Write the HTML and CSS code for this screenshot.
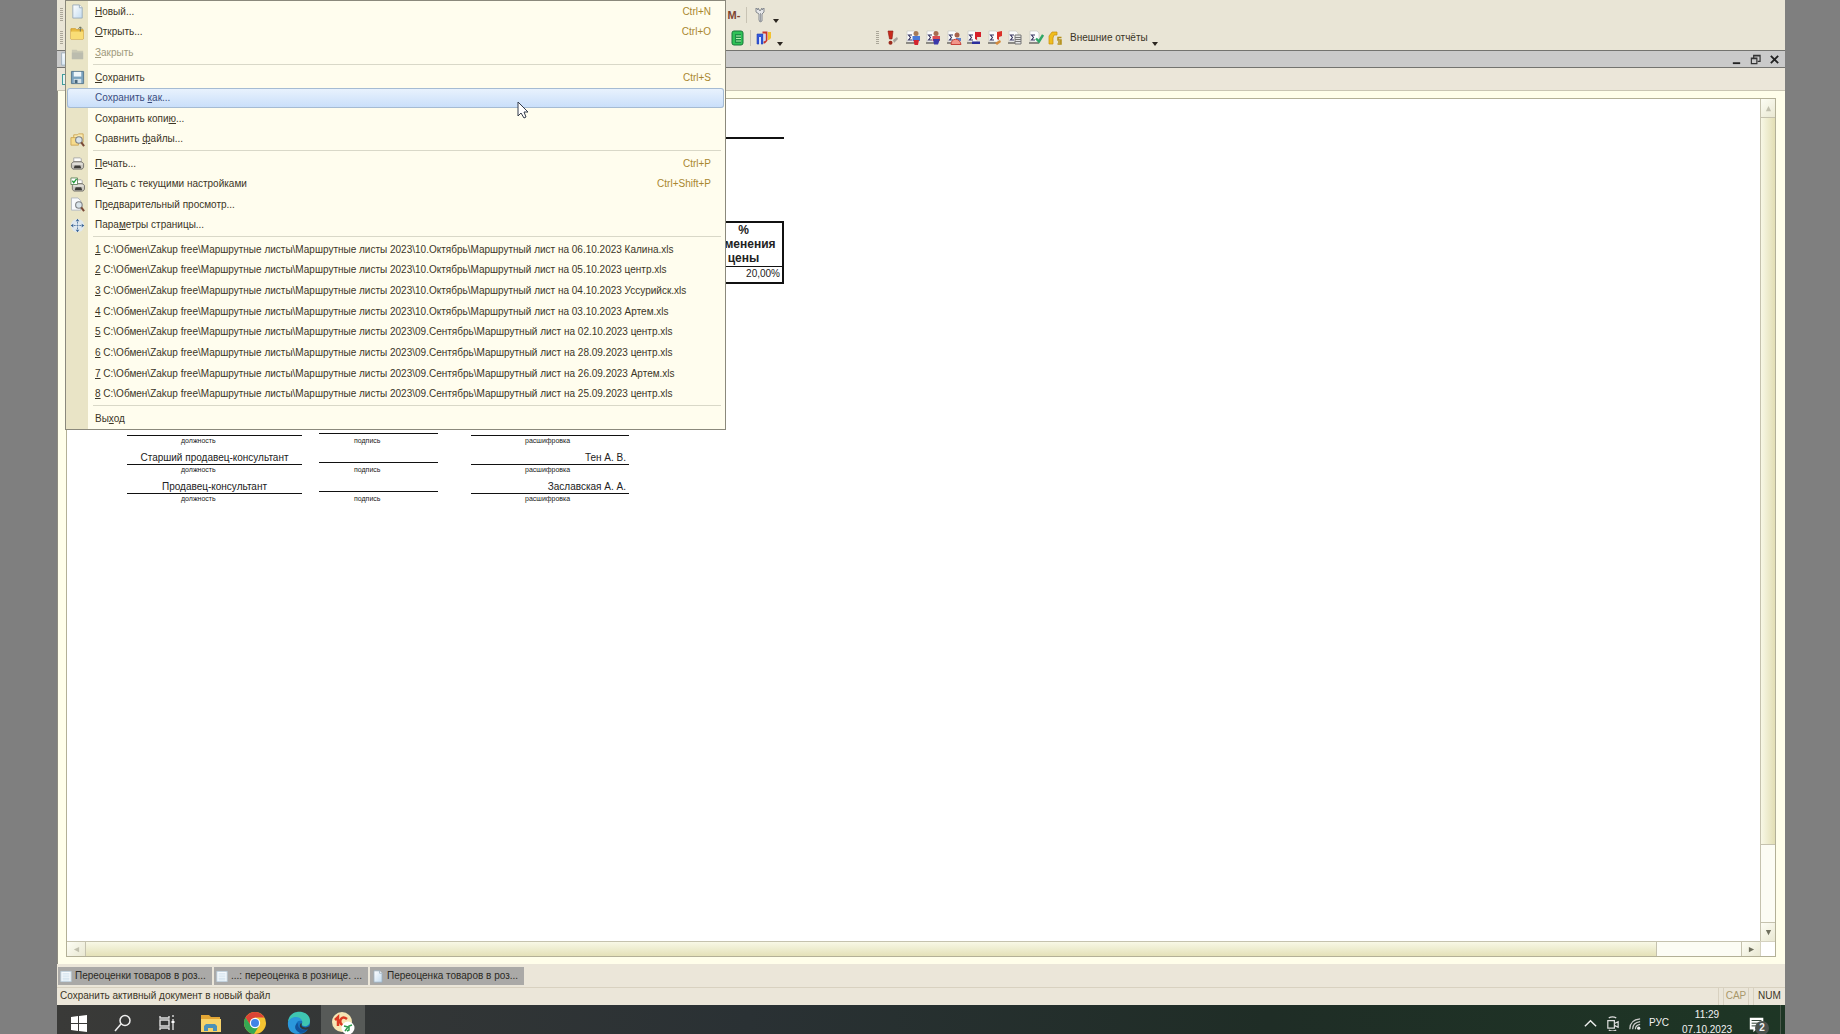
FILE: index.html
```html
<!DOCTYPE html>
<html lang="ru">
<head>
<meta charset="utf-8">
<title>Переоценка товаров в рознице</title>
<link rel="stylesheet" href="styles.css">
</head>
<body>
<svg class="defs" aria-hidden="true">
  <defs>
    <linearGradient id="paper" x1="0" y1="0" x2="1" y2="1"><stop offset="0" stop-color="#fff"/><stop offset="1" stop-color="#c3dcf0"/></linearGradient>
    <symbol id="page" viewBox="0 0 14 16"><path d="M2 1h7l3 3v11H2z" fill="url(#paper)" stroke="#9aacba"/><path d="M9 1v3h3" fill="#fff" stroke="#9aacba"/></symbol>
    <symbol id="doc" viewBox="0 0 14 14"><path d="M1 1h12v12H1z" fill="#f6fafd" stroke="#b9cbd9"/><path d="M3 4h8M3 6.500h8M3 9h8M3 11h8" stroke="#c4d9e8"/></symbol>
    <symbol id="printer" viewBox="0 0 16 16"><path d="M4 7V2h7l1 1v4" fill="#fdfdfb" stroke="#aaa"/><path d="M1.500 8 4 6h8l2.500 2v4L13 14H3l-1.500-2z" fill="#c9c7c0" stroke="#77756e"/><path d="M5 10h6l1 3H4z" fill="#3d3c38"/><path d="M2.500 8.500h11" stroke="#f6f5f0"/></symbol>
    <symbol id="lens" viewBox="0 0 16 16"><circle cx="9.500" cy="8.500" r="3.500" fill="#d9e4ea" stroke="#7f8285" stroke-width="1.200"/><path d="m12 11 3 4" stroke="#7a4a38" stroke-width="2.200"/></symbol>
    <symbol id="sigma" viewBox="0 0 16 16"><path d="M2 1h7l2 2v9H2z" fill="#fcfcfc" stroke="#c9c9c4" stroke-width=".7"/><path d="M7 5H3.500L5.500 7.500 3.500 10H7" fill="none" stroke="#34325e" stroke-width="1.100"/><path d="M1 13h10" stroke="#343434"/></symbol>
  </defs>
</svg>

<div class="app">
  <header class="bars">
    <div class="bar">
      <span class="grip"></span>
      <div class="tools tools-top">
        <button class="memory" type="button">M-</button>
        <span class="split"></span>
        <button class="tool" type="button" aria-label="Настройка"><svg viewBox="0 0 16 16"><path d="M4 1v4l3 2v6l1 2 2-1V7l2-2V1L10 3V1L8 4 6 1v2z" fill="#e5e6e8" stroke="#85898f"/><path d="M8.500 6v8" stroke="#9a9ea3"/></svg></button>
        <span class="more"></span>
      </div>
    </div>
    <div class="bar">
      <span class="grip"></span>
      <div class="tools tools-low">
        <button class="tool" type="button" aria-label="Калькулятор"><svg viewBox="0 0 16 16"><rect x="3" y="1" width="11" height="14" rx="2" fill="#2fc257" stroke="#17793a"/><path d="M6 4h6v9H6z" fill="#1c8f46"/><path d="M7 6h5M7 8.500h5M7 11h5" stroke="#b5f2ae"/></svg></button>
        <span class="split"></span>
        <button class="tool" type="button" aria-label="Окна"><svg viewBox="0 0 16 16"><path d="M1 4h6v10H5V7H3v7H1z" fill="#3358dc" stroke="#2440b0" stroke-width=".6"/><path d="M3 7h2v7H3z" fill="#d5e0fb"/><path d="M6.500 2.500h4v8L8 13" fill="none" stroke="#c9342c" stroke-width="1.800"/><path d="M7.500 4h2v7h-2z" fill="#c8d6fa"/><path d="M12 2h3v6l-2 2h-1z" fill="#f2c230"/></svg></button>
        <span class="more"></span>
      </div>
      <div class="reports">
        <span class="grip"></span>
        <div class="report-icons">
          <button class="tool" type="button" aria-label="Важное"><svg viewBox="0 0 16 16"><path d="M4 1h5L8 9H5.500z" fill="#c92a1c" stroke="#8c1a12" stroke-width=".6"/><circle cx="6.500" cy="12.700" r="2" fill="#9c2c1e"/><path d="m9 10 4-3 1 2-4 4z" fill="#a5a39b"/></svg></button>
          <button class="tool" type="button" aria-label="Отчёт 1"><svg viewBox="0 0 16 16"><use href="#sigma"/><circle cx="11" cy="3.500" r="2.500" fill="#a87a58"/><path d="M7.500 6h7.500v5H7.500z" fill="#4b79d8"/><path d="M8.500 10H14l-1 5H9.500z" fill="#d3232d"/></svg></button>
          <button class="tool" type="button" aria-label="Отчёт 2"><svg viewBox="0 0 16 16"><use href="#sigma"/><circle cx="11" cy="3.500" r="2.500" fill="#a86b50"/><path d="M7.500 6H15v5H7.500z" fill="#dc4b51"/><path d="M8 9h7l-2 5.500H9z" fill="#3b38aa"/></svg></button>
          <button class="tool" type="button" aria-label="Отчёт 3"><svg viewBox="0 0 16 16"><use href="#sigma"/><circle cx="11" cy="5" r="2.500" fill="#a8614a"/><path d="M10 8h5v3h-5z" fill="#5f82d0"/><path d="M5 14.500c0-7 9-7 10 0z" fill="#f1968a" stroke="#c7423a"/></svg></button>
          <button class="tool" type="button" aria-label="Отчёт 4"><svg viewBox="0 0 16 16"><use href="#sigma"/><path d="M9 9V2h6v5h-4v3z" fill="#d61f2a"/><path d="M6 11.500h8V14H6z" fill="#2b2f9c"/></svg></button>
          <button class="tool" type="button" aria-label="Отчёт 5"><svg viewBox="0 0 16 16"><use href="#sigma"/><path d="M10 9V2l5-1v5l-3 1v3z" fill="#dc3028"/><path d="m8 13 5-3 1 2-4 3z" fill="#d58a3c"/></svg></button>
          <button class="tool" type="button" aria-label="Отчёт 6"><svg viewBox="0 0 16 16"><use href="#sigma"/><path d="M8 5h6v9H8z" fill="#e6e6e6" stroke="#777"/><path d="M8 7.500h6M8 9.500h6M8 11.500h6" stroke="#777"/></svg></button>
          <button class="tool" type="button" aria-label="Отчёт 7"><svg viewBox="0 0 16 16"><use href="#sigma"/><path d="m8 8.500 3 3L15 5" fill="none" stroke="#2ea665" stroke-width="2.400"/></svg></button>
          <button class="tool" type="button" aria-label="Справка"><svg viewBox="0 0 16 16"><path d="M4 14H1V6l3-4h5v3H6L5 8v6z" fill="#f0bd1e" stroke="#c68e10" stroke-width=".7"/><path d="M13.500 7.500H10V10h3v4H9.500M10 12h3" fill="none" stroke="#b48f18" stroke-width="1.500"/></svg></button>
        </div>
        <button class="outer" type="button">Внешние отчёты</button>
        <span class="more"></span>
      </div>
    </div>
  </header>

  <div class="titlebar">
    <svg class="title-icon" viewBox="0 0 14 16"><use href="#page"/></svg>
    <div class="window-buttons">
      <button type="button" aria-label="Свернуть"><svg viewBox="0 0 12 12"><path d="M2 10h8" stroke="#222" stroke-width="2"/></svg></button>
      <button type="button" aria-label="Восстановить"><svg viewBox="0 0 12 12"><path d="M4 4V1.500h7V8H8.500M1.500 4.500h6v6h-6zM4 2h7M1.500 5h6" fill="none" stroke="#333" stroke-width="1.300"/></svg></button>
      <button type="button" aria-label="Закрыть окно"><svg viewBox="0 0 12 12"><path d="m2 2 8 8M10 2l-8 8" stroke="#222" stroke-width="2"/></svg></button>
    </div>
  </div>
  <div class="docbar"><span class="docbar-icon"></span></div>

  <main class="workspace">
    <div class="sheet">
      <div class="canvas">
        <hr class="rule">
        <table class="prices">
          <thead><tr><th>%<br>изменения<br>цены</th></tr></thead>
          <tbody><tr><td>20,00%</td></tr></tbody>
        </table>
        <div class="signs">
          <div class="sign"><span class="name"></span><span class="name short"></span><span class="name person"></span><small>должность</small><small>подпись</small><small>расшифровка</small></div>
          <div class="sign"><span class="name">Старший продавец-консультант</span><span class="name short"></span><span class="name person">Тен А. В.</span><small>должность</small><small>подпись</small><small>расшифровка</small></div>
          <div class="sign"><span class="name">Продавец-консультант</span><span class="name short"></span><span class="name person">Заславская А. А.</span><small>должность</small><small>подпись</small><small>расшифровка</small></div>
        </div>
      </div>
      <div class="vscroll">
        <button class="arrow" type="button" aria-label="Вверх"><svg class="dim" viewBox="0 0 8 8"><path d="M4 1 7 7H1z"/></svg></button>
        <div class="thumb"></div><div class="track"></div>
        <button class="arrow" type="button" aria-label="Вниз"><svg viewBox="0 0 8 8"><path d="M1 1h6L4 7z"/></svg></button>
      </div>
      <div class="hscroll">
        <button class="arrow" type="button" aria-label="Влево"><svg class="dim" viewBox="0 0 8 8"><path d="M7 1v6L1 4z"/></svg></button>
        <div class="thumb"></div><div class="track"></div>
        <button class="arrow" type="button" aria-label="Вправо"><svg viewBox="0 0 8 8"><path d="M1 1v6l6-3z"/></svg></button>
      </div>
      <div class="corner"></div>
    </div>
  </main>

  <nav class="tabs">
    <button type="button"><svg viewBox="0 0 14 14"><use href="#doc"/></svg>Переоценки товаров в роз...</button>
    <button type="button"><svg viewBox="0 0 14 14"><use href="#doc"/></svg>...: переоценка в рознице. ...</button>
    <button type="button"><svg viewBox="0 0 14 16"><use href="#page"/></svg>Переоценка товаров в роз...</button>
  </nav>
  <footer class="status">
    <span class="hint">Сохранить активный документ в новый файл</span>
    <span class="lock off">CAP</span><span class="lock">NUM</span>
  </footer>

  <div class="taskbar">
    <button type="button" aria-label="Пуск"><svg viewBox="0 0 24 24"><path d="m4 6 7-1v7H4zM12 5l8-1v8h-8zM4 13h7v7l-7-1zM12 13h8v8l-8-1z" fill="#fff"/></svg></button>
    <button type="button" aria-label="Поиск"><svg viewBox="0 0 24 24"><circle cx="14" cy="9.500" r="5" fill="none" stroke="#eee" stroke-width="1.500"/><path d="m10 13-6 7" stroke="#eee" stroke-width="1.500"/></svg></button>
    <button type="button" aria-label="Представление задач"><svg viewBox="0 0 24 24"><path d="M5 5v2h9V5M5 19v-2h9v2M5 9h9v6H5zM18 8v11M18 4v2" fill="none" stroke="#ddd" stroke-width="1.400"/><path d="M16.500 10h3v2h-3z" fill="#fff"/></svg></button>
    <button type="button" aria-label="Проводник"><svg viewBox="0 0 24 24"><path d="M2 4h8l2 2h9v15H2z" fill="#e3a634"/><path d="M2 8h20v13H2z" fill="#f8d36a"/><path d="M5 20v-5l2-2h9l2 2v5h-4v-3H9v3z" fill="#4d91b8"/></svg></button>
    <button type="button" aria-label="Chrome"><svg viewBox="0 0 24 24"><circle cx="12" cy="12" r="11" fill="#f5c431"/><path d="M2.500 6.500A11 11 0 0 1 21.500 6.500H12L7.200 14.500z" fill="#dc4436"/><path d="M2.500 6.500A11 11 0 0 0 11 23l5-8H8z" fill="#35a853"/><circle cx="12" cy="12" r="5.200" fill="#fff"/><circle cx="12" cy="12" r="4" fill="#4284e8"/></svg></button>
    <button type="button" aria-label="Edge"><svg viewBox="0 0 24 24"><circle cx="12" cy="12" r="11" fill="#1670bd"/><path d="M1 11C2-3 23-2 23 10c0 6-7 6-8 4-1-1 1-2 0-4C12 5 4 6 1 11z" fill="#3fc6b1"/><path d="M1 11C4 4 14 5 15 10c-7-2-8 7-2 12C5 25 0 18 1 11z" fill="#2b98dc"/><path d="M11 12c-1 6 5 8 10 6-3 4-8 5-11 2s-2-7 1-8z" fill="#12539b"/><path d="M14 12c2 1-1 2 2 4 3 1 6 0 7-2l-1 4c-5 2-12-1-8-6z" fill="#30383a"/></svg></button>
    <button class="active" type="button" aria-label="1С"><svg viewBox="0 0 24 24"><circle cx="11" cy="11" r="10" fill="#f7e6b4"/><path d="M4 9 7 6v9M16 8c-5-4-8 1-6 5l3 2" fill="none" stroke="#dc3a22" stroke-width="2.500"/><circle cx="17" cy="17" r="6.500" fill="#fff"/><path d="m13 15 4 1-3 4M21 14l-3 1v4l-2 1" fill="none" stroke="#2d9c4e" stroke-width="1.500"/></svg></button>
    <div class="tray">
      <svg viewBox="0 0 16 16"><path d="m2 11 6-6 6 6" fill="none" stroke="#eee" stroke-width="1.500"/></svg>
      <svg viewBox="0 0 16 16"><path d="M3 5h7v8H3zM10 8l4-2v6l-4-2M4 2q4-2 8 0M4 15q4 2 8 0" fill="none" stroke="#ddd" stroke-width="1.300"/></svg>
      <svg viewBox="0 0 16 16"><path d="M3 14Q3 4 14 3M6 14q0-7 8-8M9 14q0-4 5-5" fill="none" stroke="#ccc" stroke-width="1.300"/><circle cx="12.500" cy="13" r="1.700" fill="#eee"/></svg>
      <span class="lang">РУС</span>
      <time class="clock" datetime="2023-10-07T11:29">11:29<br>07.10.2023</time>
      <span class="notes"><svg viewBox="0 0 20 20"><path d="M2 2h15v13H9l-3 3v-3H2z" fill="#fff"/><path d="M4 5h11M4 8h11M4 11h8" stroke="#1e3325"/></svg><b>2</b></span>
    </div>
  </div>

  <div class="menu" role="menu">
    <div class="group three">
      <button role="menuitem"><svg viewBox="0 0 14 16"><use href="#page"/></svg><span><u>Н</u>овый...</span><kbd>Ctrl+N</kbd></button>
      <button role="menuitem"><svg viewBox="0 0 16 16"><path d="M1 4h5l1 1h7v10H1z" fill="#e9bd45" stroke="#cf9d2b"/><path d="M1 7h13v8H1z" fill="#f9dd75"/><path d="M11 7V2M9 4l2-2 2 2" fill="none" stroke="#67705a"/></svg><span><u>О</u>ткрыть...</span><kbd>Ctrl+O</kbd></button>
      <button role="menuitem" disabled><svg viewBox="0 0 16 16"><path d="M2 4h5l1 1h6v9H2z" fill="#c9c8b4"/><path d="M2 7h12v7H2z" fill="#bbbcae"/></svg><span><u>З</u>акрыть</span></button>
    </div>
    <hr>
    <div class="group four">
      <button role="menuitem"><svg viewBox="0 0 16 16"><path d="M1.500 1.500h13v13h-13z" fill="#7ba3bf" stroke="#57778d"/><path d="M4 2h8v5H4z" fill="#eef6fa"/><path d="M4 9.500h8V14H4z" fill="#d4e2ea"/><path d="M5 10.500h3V14H5z" fill="#47677c"/></svg><span><u>С</u>охранить</span><kbd>Ctrl+S</kbd></button>
      <button role="menuitem" class="current"><i></i><span>Сохранить <u>к</u>ак...</span></button>
      <button role="menuitem"><i></i><span>Сохранить копи<u>ю</u>...</span></button>
      <button role="menuitem"><svg viewBox="0 0 16 16"><path d="M4 3h4l1-1h5v9H4z" fill="#fbeab0" stroke="#cda756"/><path d="M1 6h8v8H1z" fill="#f7dc8c" stroke="#cda756"/><use href="#lens"/></svg><span>Сравнить <u>ф</u>айлы...</span></button>
    </div>
    <hr>
    <div class="group four">
      <button role="menuitem"><svg viewBox="0 0 16 16"><use href="#printer"/></svg><span><u>П</u>ечать...</span><kbd>Ctrl+P</kbd></button>
      <button role="menuitem"><svg viewBox="0 0 16 16"><use href="#printer" x="1" y="1"/><path d="M1 1h7v7H1z" fill="#fff" stroke="#678a61"/><path d="m2.500 4 1.500 2L7 2" fill="none" stroke="#1f9a37" stroke-width="1.400"/></svg><span>Пе<u>ч</u>ать с текущими настройками</span><kbd>Ctrl+Shift+P</kbd></button>
      <button role="menuitem"><svg viewBox="0 0 16 16"><path d="M1.500 1h7l3 3v10h-10z" fill="#f8fafc" stroke="#b3b9bd"/><use href="#lens"/></svg><span>П<u>р</u>едварительный просмотр...</span></button>
      <button role="menuitem"><svg viewBox="0 0 16 16"><circle cx="8" cy="8" r="7" fill="#dfe8ef"/><path d="M8 1v14M1 8h14" stroke="#587ca5" stroke-dasharray="2 1"/><path d="m8 1 2 2.500H6zM8 15l2-2.500H6zM1 8l2.500-2v4zM15 8l-2.500-2v4z" fill="#3d6696"/></svg><span>Пара<u>м</u>етры страницы...</span></button>
    </div>
    <hr>
    <div class="group eight">
      <button role="menuitem"><i></i><span><u>1</u> C:\Обмен\Zakup free\Маршрутные листы\Маршрутные листы 2023\10.Октябрь\Маршрутный лист на 06.10.2023 Калина.xls</span></button>
      <button role="menuitem"><i></i><span><u>2</u> C:\Обмен\Zakup free\Маршрутные листы\Маршрутные листы 2023\10.Октябрь\Маршрутный лист на 05.10.2023 центр.xls</span></button>
      <button role="menuitem"><i></i><span><u>3</u> C:\Обмен\Zakup free\Маршрутные листы\Маршрутные листы 2023\10.Октябрь\Маршрутный лист на 04.10.2023 Уссурийск.xls</span></button>
      <button role="menuitem"><i></i><span><u>4</u> C:\Обмен\Zakup free\Маршрутные листы\Маршрутные листы 2023\10.Октябрь\Маршрутный лист на 03.10.2023 Артем.xls</span></button>
      <button role="menuitem"><i></i><span><u>5</u> C:\Обмен\Zakup free\Маршрутные листы\Маршрутные листы 2023\09.Сентябрь\Маршрутный лист на 02.10.2023 центр.xls</span></button>
      <button role="menuitem"><i></i><span><u>6</u> C:\Обмен\Zakup free\Маршрутные листы\Маршрутные листы 2023\09.Сентябрь\Маршрутный лист на 28.09.2023 центр.xls</span></button>
      <button role="menuitem"><i></i><span><u>7</u> C:\Обмен\Zakup free\Маршрутные листы\Маршрутные листы 2023\09.Сентябрь\Маршрутный лист на 26.09.2023 Артем.xls</span></button>
      <button role="menuitem"><i></i><span><u>8</u> C:\Обмен\Zakup free\Маршрутные листы\Маршрутные листы 2023\09.Сентябрь\Маршрутный лист на 25.09.2023 центр.xls</span></button>
    </div>
    <hr>
    <div class="group">
      <button role="menuitem"><i></i><span>Вы<u>х</u>од</span></button>
    </div>
  </div>
  <svg class="cursor" viewBox="0 0 12 18" aria-hidden="true"><path d="M1 1v14l3-3 3 5 2-1-2-5h4z" fill="#fff" stroke="#333b4a"/></svg>
</div>
</body>
</html>
```
FILE: styles.css
```css
* { box-sizing: border-box; }
body {
  margin: 0;
  padding: 0 55px 0 57px;
  background: #7f7f7f;
  font: 10px/14px "Liberation Sans", Arial, sans-serif;
  color: #3b3526;
  overflow: hidden;
}
button { margin: 0; padding: 0; border: 0; background: none; font: inherit; color: inherit; }
svg { display: block; flex: none; }
.defs { position: absolute; width: 0; height: 0; }

.app {
  position: relative;
  display: flex;
  flex-direction: column;
  height: 100vh;
  background: #ebe6d9;
}

/* toolbars */
.bars { flex: none; padding-top: 3px; height: 50px; background: #e9e5d6; }
.bar { display: flex; align-items: center; height: 23px; padding-left: 3px; }
.grip { flex: none; width: 3px; height: 13px; background: repeating-linear-gradient(#aaa698 0 1px, transparent 1px 2px); }
.tools { display: flex; align-items: center; gap: 4px; }
.tools-top { margin-left: 664px; }
.tools-low { margin-left: 666px; }
.memory { width: 14px; font-size: 11px; font-weight: bold; color: #7c4430; }
.tool { width: 16px; height: 16px; }
.tool svg { width: 16px; height: 16px; }
.split { width: 1px; height: 16px; margin: 0 1px; background: #c8c3b4; }
.more { align-self: flex-end; margin-left: 1px; border: 3px solid transparent; border-top: 4px solid #2b2620; border-bottom: 0; }
.reports { display: flex; align-items: center; margin-left: 93px; }
.report-icons { display: flex; justify-content: space-between; width: 180px; margin: 0 6px 0 5px; }
.reports .more { margin-left: 4px; }

.titlebar {
  display: flex;
  justify-content: space-between;
  align-items: center;
  flex: none;
  height: 18px;
  padding: 0 5px 0 2px;
  border: solid #73736f;
  border-width: 1px 0;
  background: #cacaca;
}
.title-icon { width: 14px; height: 14px; }
.window-buttons { display: flex; gap: 8px; }
.window-buttons svg { width: 11px; height: 11px; }
.docbar { flex: none; height: 23px; padding: 6px 5px; border-bottom: 1px solid #c9c5b3; }
.docbar-icon { display: block; width: 10px; height: 11px; border: 1px solid #3f9c9c; background: #e6f4f2; }

/* document */
.workspace { flex: 1; display: flex; min-height: 0; padding: 7px 9px 7px 8px; background: #fffeea; border-left: 1px solid #8c8a80; }
.sheet {
  flex: 1;
  display: grid;
  grid-template: 1fr 15px / 1fr 15px;
  border: 1px solid #b3b097;
  background: #fff;
}
.canvas { padding: 38px 0 0 60px; color: #222; }
.rule { width: 657px; height: 2px; margin: 0; border: 0; background: #111; }
.prices { width: 81px; margin: 82px 0 0 576px; border: 2px solid #111; border-collapse: collapse; }
.prices th, .prices td { padding: 0; line-height: 14px; }
.prices th { padding-bottom: 1px; font-size: 12px; border-bottom: 1px solid #111; }
.prices td { padding: 0 2px 1px 0; text-align: right; }
.signs { display: grid; margin-top: 134px; }
.sign { display: grid; grid-template-columns: 175px 119px 158px; grid-template-rows: 18px 11px; column-gap: 17px; }
.sign .person { margin-left: 16px; width: 158px; text-align: right; padding-right: 3px; }
.name { height: 18px; padding-top: 5px; line-height: 12px; text-align: center; border-bottom: 1px solid #111; white-space: nowrap; }
.name.short { height: 16px; }
.sign small { font-size: 7px; line-height: 10px; padding-left: 54px; }
.sign small:nth-of-type(2) { padding-left: 35px; }
.sign small:nth-of-type(3) { padding-left: 70px; }

.vscroll, .hscroll { display: flex; background: #fcfcf4; }
.vscroll { flex-direction: column; border-left: 1px solid #c5c2ae; }
.hscroll { border-top: 1px solid #c5c2ae; }
.arrow { display: grid; place-items: center; flex: none; background: linear-gradient(135deg, #fdfdf4, #e9e8d2); }
.vscroll .arrow { height: 18px; }
.hscroll .arrow { width: 18px; }
.arrow svg { width: 7px; height: 7px; fill: #6f6f5d; }
.arrow .dim { fill: #c1c0ae; }
.vscroll .thumb { flex: 731; border: solid #c5c2ae; border-width: 1px 0; background: linear-gradient(90deg, #f8f8e6, #e2deb4); }
.vscroll .track { flex: 78; border-bottom: 1px solid #c5c2ae; }
.hscroll .thumb { flex: 1575; border: solid #c5c2ae; border-width: 0 1px; background: linear-gradient(#f8f8e6, #e4e1b8); }
.hscroll .track { flex: 84; border-right: 1px solid #c5c2ae; }
.corner { border: solid #d5d2c0; border-width: 1px 0 0 1px; }

/* window tabs and status line */
.tabs { display: flex; gap: 2px; flex: none; padding: 3px 1px 2px; }
.tabs button { display: flex; align-items: center; gap: 3px; width: 154px; height: 18px; padding: 0 2px; background: #aaa9a7; white-space: nowrap; color: #2b2924; }
.tabs svg { width: 12px; height: 13px; }
.status { display: flex; flex: none; height: 18px; border-top: 1px solid #d8d1c0; line-height: 16px; }
.hint { flex: 1; padding-left: 3px; margin-right: 2px; border-right: 1px solid #d8d1c0; }
.lock { width: 32px; text-align: center; border-left: 1px solid #d8d1c0; }
.lock.off { width: 26px; margin: 0 4px 0 2px; border-right: 1px solid #d8d1c0; color: #a9986a; }

/* taskbar */
.taskbar { display: flex; flex: none; height: 29px; overflow: hidden; background: linear-gradient(90deg, #3a3a38, #2a3134 40%, #1f2d26 70%, #1e3625); color: #f2f2f2; }
.taskbar button { display: flex; justify-content: center; flex: none; width: 44px; height: 40px; padding-top: 6px; }
.taskbar button svg { width: 24px; height: 24px; }
.taskbar .active { background: #575a58; }
.tray { display: flex; align-items: flex-start; gap: 7px; margin: 0 4px 0 auto; height: 40px; padding: 11px 10px 0 0; border-right: 1px solid #4c5a4d; }
.tray svg { width: 15px; height: 15px; }
.lang { width: 22px; line-height: 14px; }
.clock { width: 56px; margin: -9px 6px 0 1px; line-height: 15px; text-align: center; }
.notes { position: relative; width: 22px; height: 20px; }
.notes svg { width: 18px; height: 18px; }
.notes b { position: absolute; left: 7px; top: 5px; width: 14px; height: 14px; border-radius: 7px; background: #4a514c; text-align: center; line-height: 14px; }

/* drop-down menu over the window */
.menu {
  position: absolute;
  left: 8px;
  top: 0;
  width: 661px;
  padding: 0 1px;
  border: 1px solid #8b897c;
  background: linear-gradient(90deg, #e9e4c6 22px, #fffdee 22px);
}
.menu hr { height: 1px; margin: 1px 3px 2px 26px; border: 0; background: #d9d8c8; }
.group { display: grid; grid-auto-rows: 1fr; height: 21px; }
.three { height: 62px; }
.four { height: 82px; }
.eight { height: 165px; }
.group button { display: grid; grid-template-columns: 28px 1fr auto; align-items: center; min-height: 0; padding: 1px 13px 0 0; text-align: left; white-space: nowrap; }
.group button svg { width: 15px; height: 15px; margin-left: 3px; }
.group kbd { font: inherit; color: #a9872f; }
.group button:disabled { color: #a09a7c; }
.group .current { border-radius: 3px; color: #3a4d80; background: linear-gradient(#eaf3fd, #c8defa); box-shadow: inset 0 0 0 1px #a5bbd3; }
.cursor { position: absolute; left: 460px; top: 101px; width: 12px; height: 18px; }
```
